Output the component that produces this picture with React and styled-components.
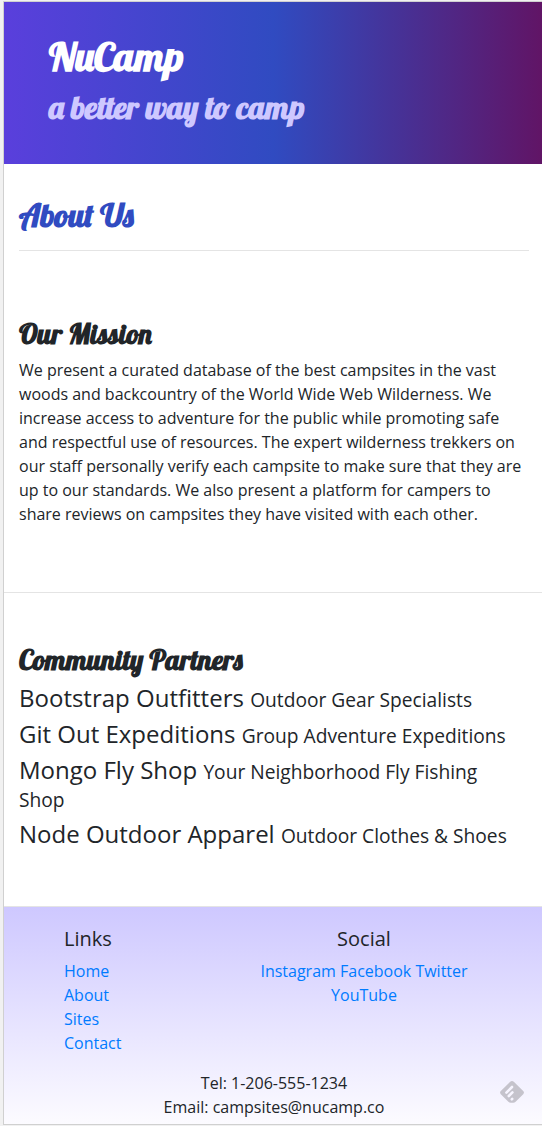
import React from "react";
import styled, { createGlobalStyle } from "styled-components";

const ink = "#212529";
const displayFont = `Lobster, "Liberation Serif", serif`;

const GlobalStyle = createGlobalStyle`
  *, *::before, *::after { box-sizing: border-box; }
  body {
    margin: 0;
    overflow-x: hidden;
    background: #f1f1f1;
    color: ${ink};
    font-family: "Open Sans", "Noto Sans", sans-serif;
    font-size: 16px;
    line-height: 24px;
  }
  h1, h2, h3, h4, p, ul { margin: 0; padding: 0; }
`;

const Page = styled.div`
  position: relative;
  margin: 1px -2px 1px 3px;
  border: solid #d0d0d0;
  border-width: 1px 0 1px 1px;
  background: #fff;
`;

const Banner = styled.header`
  padding: 30px 45px 38px;
  background: linear-gradient(to right, #5a3fdc, #304bc1 50%, #611465);
`;

const Display = styled.h2`
  font-family: ${displayFont};
  font-weight: 700;
  font-size: ${({ $size }) => $size}px;
  line-height: ${({ $line }) => $line}px;
  color: ${({ $color }) => $color || ink};
`;

const Tagline = styled(Display)`
  margin-top: 8px;
`;

const TitleBar = styled.div`
  margin: 0 15px;
  padding: 32px 0 16px;
  border-bottom: 1px solid #e4e4e4;
`;

const Section = styled.section`
  padding: ${({ $top }) => $top}px 15px ${({ $bottom }) => $bottom}px;
  border-bottom: 1px solid #e4e4e4;
`;

const SectionHeading = styled(Display)`
  margin-bottom: 6px;
`;

const Partner = styled.h4`
  margin-bottom: 8px;
  padding-right: 15px;
  font-weight: 400;
  font-size: 24px;
  line-height: 28px;

  small {
    font-size: 80%;
    line-height: 20px;
  }
`;

const Footer = styled.footer`
  padding: 16px 0 5px;
  background: linear-gradient(to bottom, #cec8ff, #fcfbff);
`;

const FooterColumns = styled.div`
  display: grid;
  grid-template-columns: 4fr 6fr;
  padding: 0 calc(100% / 12);
`;

const FooterColumn = styled.div`
  padding: 0 15px;
  text-align: ${({ $align }) => $align || "left"};
`;

const FooterHeading = styled.h3`
  padding-top: 4px;
  margin-bottom: 8px;
  font-weight: 400;
  font-size: 20px;
  line-height: 24px;
`;

const LinkList = styled.ul`
  list-style: none;
`;

const Link = styled.a`
  color: #007bff;
  text-decoration: none;
`;

const ContactInfo = styled.address`
  margin-top: 16px;
  text-align: center;
  font-style: normal;
`;

const FeedButton = styled.button`
  position: absolute;
  right: 20px;
  bottom: 21px;
  width: 24px;
  height: 22px;
  padding: 0;
  border: 0;
  background: none;

  svg { display: block; }
`;

const partners = [
  ["Bootstrap Outfitters", "Outdoor Gear Specialists"],
  ["Git Out Expeditions", "Group Adventure Expeditions"],
  ["Mongo Fly Shop", "Your Neighborhood Fly Fishing Shop"],
  ["Node Outdoor Apparel", "Outdoor Clothes & Shoes"],
];
const siteLinks = ["Home", "About", "Sites", "Contact"];
const socialLinks = ["Instagram", "Facebook", "Twitter", "YouTube"];

export default function App() {
  return (
    <>
      <GlobalStyle />
      <Page>
        <Banner>
          <Display as="h1" $size={40} $line={48} $color="#fff">NuCamp</Display>
          <Tagline $size={32} $line={38} $color="#cec8ff">a better way to camp</Tagline>
        </Banner>

        <main>
          <TitleBar>
            <Display $size={32} $line={38} $color="#304bc1">About Us</Display>
          </TitleBar>

          <Section $top={65} $bottom={66}>
            <SectionHeading as="h3" $size={28} $line={36}>Our Mission</SectionHeading>
            <p>
              We present a curated database of the best campsites in the vast woods and
              backcountry of the World Wide Web Wilderness. We increase access to adventure
              for the public while promoting safe and respectful use of resources. The
              expert wilderness trekkers on our staff personally verify each campsite to
              make sure that they are up to our standards. We also present a platform for
              campers to share reviews on campsites they have visited with each other.
            </p>
          </Section>

          <Section $top={49} $bottom={50}>
            <SectionHeading as="h3" $size={28} $line={36}>Community Partners</SectionHeading>
            {partners.map(([name, detail]) => (
              <Partner key={name}>
                {name} <small>{detail}</small>
              </Partner>
            ))}
          </Section>
        </main>

        <Footer>
          <FooterColumns>
            <FooterColumn>
              <FooterHeading>Links</FooterHeading>
              <LinkList>
                {siteLinks.map((label) => (
                  <li key={label}><Link href="#">{label}</Link></li>
                ))}
              </LinkList>
            </FooterColumn>
            <FooterColumn $align="center">
              <FooterHeading>Social</FooterHeading>
              {socialLinks.map((label) => (
                <React.Fragment key={label}>
                  <Link href="#">{label}</Link>{" "}
                </React.Fragment>
              ))}
            </FooterColumn>
          </FooterColumns>
          <ContactInfo>
            Tel: 1-206-555-1234<br />
            Email: campsites@nucamp.co
          </ContactInfo>
        </Footer>

        <FeedButton type="button" aria-label="Follow">
          <svg width="24" height="22" viewBox="0 0 24 22" aria-hidden="true">
            <path
              d="M10.2 .8Q12 -.8 13.8 .8L23.2 10Q24.7 11.6 23.2 13.2L15.6 20.8Q14.6 21.8 13.2 21.8H10.8Q9.4 21.8 8.4 20.8L.8 13.2Q-.7 11.6 .8 10Z"
              fill="#c5c3cc"
            />
            <g stroke="#f7f5ff" strokeWidth="2.6" strokeLinecap="round">
              <path d="M6.4 11.6L12 6M8.8 15L12.4 11.4M11.8 18.3L12.2 17.9" />
            </g>
          </svg>
        </FeedButton>
      </Page>
    </>
  );
}
